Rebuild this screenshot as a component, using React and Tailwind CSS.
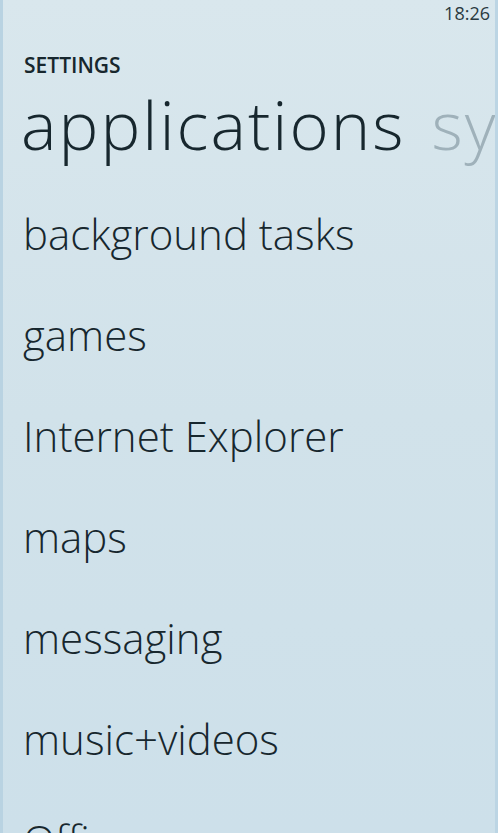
import React from "react";

const items = [
  "background tasks",
  "games",
  "Internet Explorer",
  "maps",
  "messaging",
  "music+videos",
  "Office",
];

export default function App() {
  return (
    <div
      className="relative w-[498px] h-[833px] overflow-hidden bg-gradient-to-b from-[#d9e7ed] via-[#d1e2ea] to-[#cde0ea] text-[#17272e]"
      style={{ fontFamily: '"Open Sans", "Noto Sans", sans-serif' }}
    >
      <div className="absolute inset-y-0 left-0 w-[3px] bg-[#b9d3e2]" />
      <div className="absolute inset-y-0 right-0 w-[3px] bg-[#bcd5e4]" />
      <div className="flex justify-end pr-[8px] pt-[1px] h-[25px] text-[18px] leading-[24px] text-[#2a3a40]">
        18:26
      </div>
      <div className="pl-[24px] mt-[26px] h-[28px] text-[21px] leading-[28px] font-semibold">
        SETTINGS
      </div>
      <div className="pl-[21px] mt-[5px] h-[80px] flex whitespace-nowrap text-[67px] leading-[80px] font-light tracking-[2px]">
        <span>applications</span>
        <span className="ml-[26px] text-[#9fb1ba]">system</span>
      </div>
      <div className="mt-[42px] pl-[23px] flex flex-col">
        {items.map((t) => (
          <div key={t} className="h-[101px] shrink-0 text-[42px] leading-[56px] font-light tracking-[0px] whitespace-nowrap">
            {t}
          </div>
        ))}
      </div>
    </div>
  );
}
